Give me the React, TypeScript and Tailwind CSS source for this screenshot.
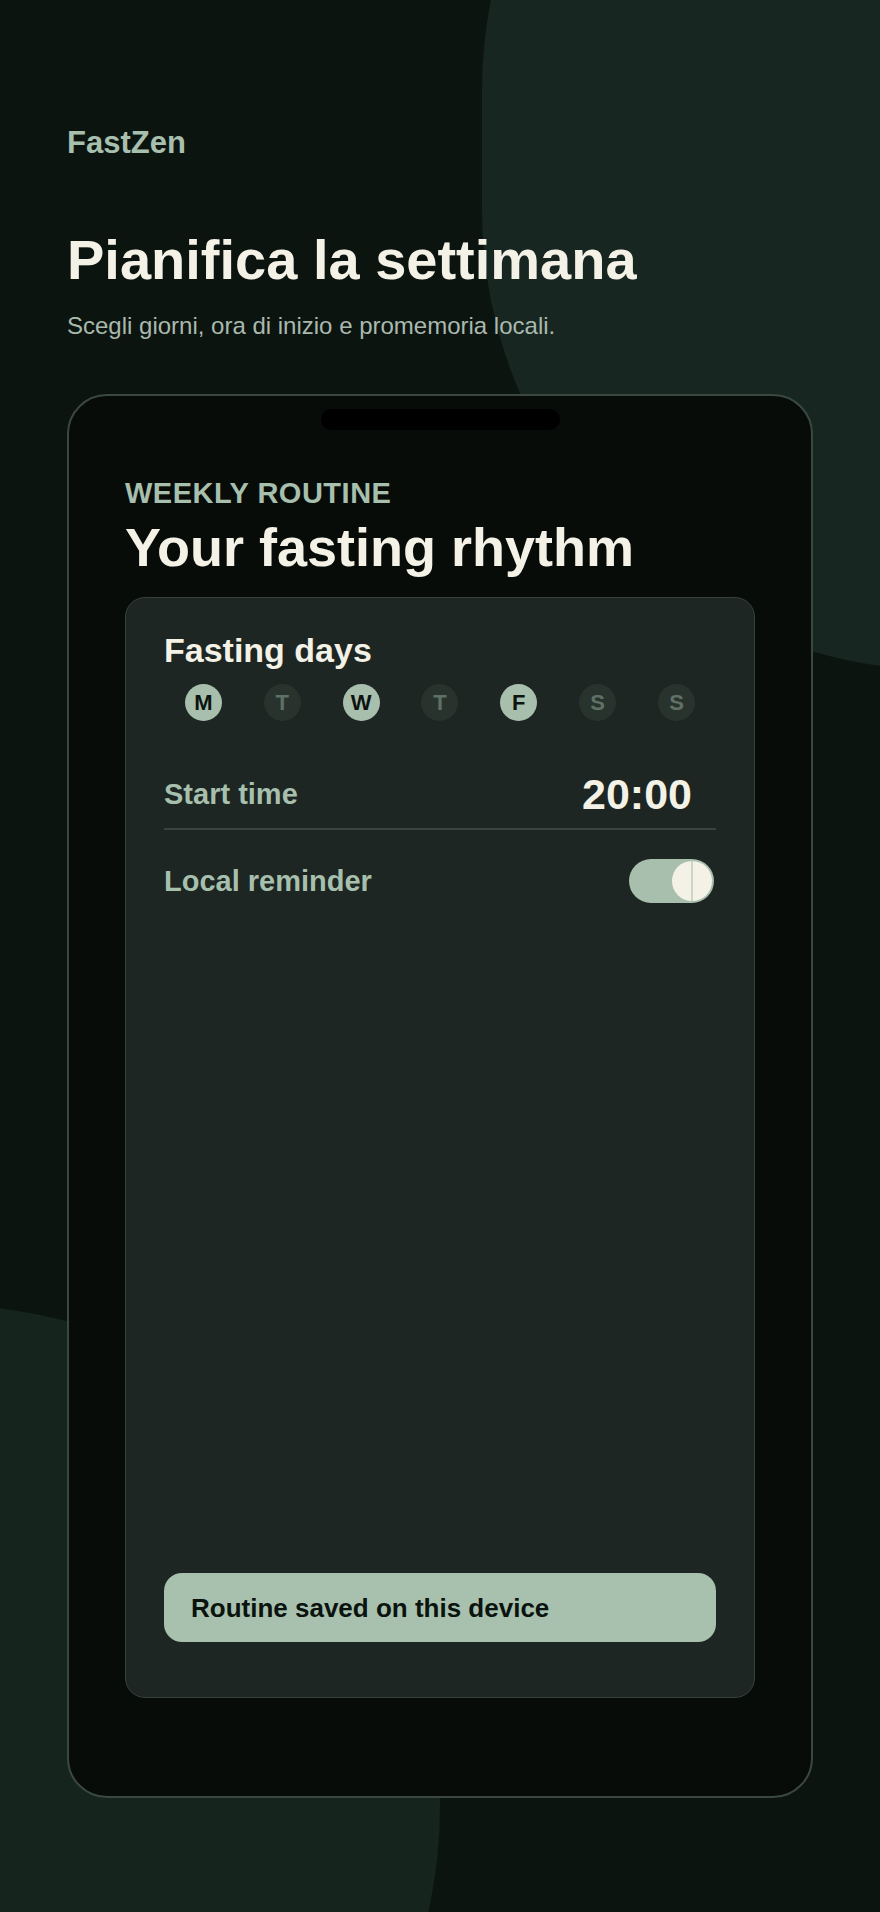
const days = [
  { label: 'M', on: true },
  { label: 'T', on: false },
  { label: 'W', on: true },
  { label: 'T', on: false },
  { label: 'F', on: true },
  { label: 'S', on: false },
  { label: 'S', on: false },
];

export default function App() {
  return (
    <div className="relative min-h-[1912px] w-full overflow-hidden bg-[#0c1410] font-['Liberation_Sans',Arial,sans-serif]">
      {/* Background blobs */}
      <div className="absolute left-[482px] top-[-370px] h-[1040px] w-[920px] rounded-full bg-[#172620]" />
      <div className="absolute left-[-560px] top-[1305px] h-[1000px] w-[1000px] rounded-full bg-[#16241e]" />

      <div className="relative px-[67px] pt-[127px] pb-[116px]">
        {/* Header */}
        <p className="text-[31px] font-bold leading-none text-[#a7bfad]">FastZen</p>
        <h1 className="mt-[74px] text-[56px] font-bold leading-none text-[#f4f1e6]">
          Pianifica la settimana
        </h1>
        <p className="mt-[26px] text-[24px] leading-none text-[#a9b9ae]">
          Scegli giorni, ora di inizio e promemoria locali.
        </p>

        {/* Phone frame */}
        <div className="mt-[56px] h-[1404px] rounded-[40px] border-2 border-[#3b4841] bg-[#070c09] px-[56px] pt-[13px]">
          <div className="mx-auto h-[21px] w-[239px] rounded-full bg-black" />

          <p className="mt-[49px] text-[29px] font-bold leading-none tracking-[0.5px] text-[#a7bfad]">WEEKLY ROUTINE</p>
          <h2 className="mt-[12px] text-[54px] font-bold leading-none text-[#f4f1e6]">Your fasting rhythm</h2>

          {/* Routine card */}
          <div className="mt-[23px] flex h-[1101px] flex-col rounded-[20px] border border-[#36423c] bg-[#1d2622] px-[38px] pt-[35px] pb-[55px]">
            <h3 className="text-[34px] font-bold leading-none text-[#f4f1e6]">Fasting days</h3>

            <div className="mt-[17px] flex justify-around">
              {days.map((d, i) => (
                <div
                  key={i}
                  className={
                    d.on
                      ? 'flex h-[37px] w-[37px] items-center justify-center rounded-full bg-[#a8bfae] text-[22px] font-bold text-[#0c140f]'
                      : 'flex h-[37px] w-[37px] items-center justify-center rounded-full bg-[#28332d] text-[22px] font-bold text-[#5f7066]'
                  }
                >
                  {d.label}
                </div>
              ))}
            </div>

            {/* Start time */}
            <div className="mt-[52px] flex h-[42px] items-center justify-between">
              <span className="text-[29px] font-bold leading-none text-[#a7bfad]">Start time</span>
              <span className="pr-[24px] text-[43px] font-bold leading-none text-[#f4f1e6]">20:00</span>
            </div>
            <div className="mt-[13px] h-[2px] bg-[#38453e]" />

            {/* Reminder */}
            <div className="mt-[29px] flex items-center justify-between">
              <span className="text-[29px] font-bold leading-none text-[#a7bfad]">Local reminder</span>
              <div className="mr-[2px] flex h-[44px] w-[85px] items-center justify-end rounded-full bg-[#a8bfae] p-[2px]">
                <div className="flex h-[40px] w-[40px] items-stretch justify-center rounded-full bg-[#f4f2e6]">
                  <div className="w-[2px] bg-[#cdd5c7]" />
                </div>
              </div>
            </div>

            {/* Saved banner */}
            <div className="mt-auto flex h-[69px] items-center rounded-[18px] bg-[#a8c1ae] px-[27px]">
              <span className="text-[26px] font-bold leading-none text-[#0b130e]">Routine saved on this device</span>
            </div>
          </div>
        </div>
      </div>
    </div>
  );
}
